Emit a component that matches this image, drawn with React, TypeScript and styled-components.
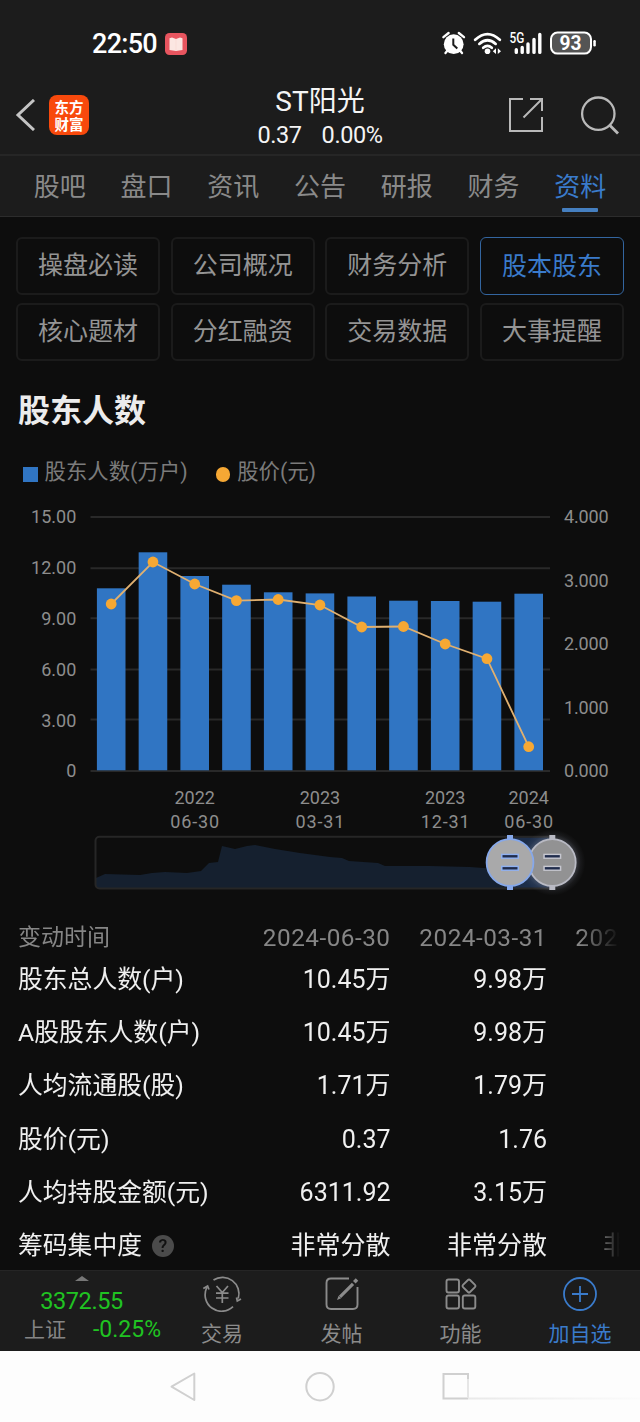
import React from 'react';
import styled, { createGlobalStyle } from 'styled-components';

const GlobalStyle = createGlobalStyle`
  * { box-sizing: border-box; }
  body {
    margin: 0;
    background: #0d0d0d;
    font-family: Roboto, "Noto Sans CJK SC", sans-serif;
    -webkit-font-smoothing: antialiased;
  }
  svg { display: block; flex: none; }
`;

const ACCENT = '#3a7bcb';
const BAR = '#3075c3';
const ORANGE = '#f6a834';

const Screen = styled.div`
  width: 640px;
  height: 1422px;
  display: flex;
  flex-direction: column;
  overflow: hidden;
  background: #0d0d0d;
`;

const StatusBar = styled.div`
  height: 75px;
  padding: 13px 44px 0 92px;
  display: flex;
  align-items: center;
  justify-content: space-between;
  background: #1c1c1c;
  color: #fff;
`;

const Clock = styled.div`
  display: flex;
  align-items: center;
  gap: 8px;
  font-size: 27px;
  line-height: 32px;
  font-weight: 500;
  letter-spacing: -0.7px;
`;

const Header = styled.header`
  height: 81px;
  display: grid;
  grid-template-columns: 200px 240px 200px;
  background: #1c1c1c;
  border-bottom: 2px solid #262626;
`;

const HeaderLeft = styled.div`
  display: flex;
  align-items: center;
  gap: 14px;
  padding-left: 15px;
`;

const Logo = styled.div`
  width: 40px;
  height: 40px;
  border-radius: 8px;
  background: #f8490c;
  color: #fff;
  display: flex;
  flex-direction: column;
  align-items: center;
  padding-top: 3px;
  font-family: "Noto Sans CJK SC", sans-serif;
  font-weight: 700;
  font-size: 14.5px;
  line-height: 17px;
`;

const HeaderTitle = styled.div`
  display: flex;
  flex-direction: column;
  align-items: center;
  color: #f4f4f4;
`;

const StockName = styled.div`
  margin-top: 10px;
  font-size: 28px;
  line-height: 34px;
`;

const Quote = styled.div`
  display: flex;
  gap: 20px;
  font-size: 23.5px;
  line-height: 33px;
  letter-spacing: -0.4px;
`;

const HeaderRight = styled.div`
  display: flex;
  align-items: center;
  justify-content: flex-end;
  gap: 36px;
  padding-right: 20px;
`;

const Tabs = styled.nav`
  height: 61px;
  padding: 0 16.5px;
  display: grid;
  grid-template-columns: repeat(7, 1fr);
  background: #1c1c1c;
  border-bottom: 1px solid #2c2c2c;
`;

const Tab = styled.div<{ $active?: boolean }>`
  display: flex;
  flex-direction: column;
  align-items: center;
  padding-top: 13px;
  font-size: 26px;
  line-height: 36px;
  color: ${(p) => (p.$active ? ACCENT : '#8a8a8a')};
  &::after {
    content: '';
    width: 36px;
    height: 4px;
    margin-top: 3px;
    border-radius: 1px;
    background: ${(p) => (p.$active ? '#457fc0' : 'transparent')};
  }
`;

const Chips = styled.div`
  margin-top: 20px;
  padding: 0 16px;
  display: grid;
  grid-template-columns: repeat(4, 1fr);
  grid-auto-rows: 58px;
  gap: 8px 10.5px;
`;

const Chip = styled.div<{ $active?: boolean }>`
  border: ${(p) => (p.$active ? '1.5px solid #33659f' : '2px solid #1b1b1b')};
  border-radius: 6px;
  display: flex;
  align-items: center;
  justify-content: center;
  padding-bottom: ${(p) => (p.$active ? 5 : 6)}px;
  font-size: 25px;
  color: ${(p) => (p.$active ? ACCENT : '#949494')};
`;

const SectionTitle = styled.h2`
  margin: 28px 0 0 18px;
  font-size: 32px;
  line-height: 44px;
  font-weight: 700;
  color: #ececec;
`;

const Legend = styled.div`
  margin-top: 21px;
  height: 41px;
  padding-left: 23px;
  display: flex;
  gap: 28px;
`;

const LegendItem = styled.div<{ $round?: boolean; $color: string }>`
  display: flex;
  gap: 7px;
  font-size: 21.4px;
  line-height: 36px;
  color: #7b7b7b;
  &::before {
    content: '';
    width: 14.5px;
    height: 14.5px;
    margin-top: 13px;
    border-radius: ${(p) => (p.$round ? '50%' : '0')};
    background: ${(p) => p.$color};
  }
`;

const Table = styled.div`
  margin-top: 22px;
  padding-left: 18px;
  overflow: hidden;
  flex: 1;
  mask-image: linear-gradient(to right, #000 580px, transparent 620px);
`;

const Row = styled.div<{ $head?: boolean }>`
  display: grid;
  grid-template-columns: 216px 156.5px 156.5px 156px;
  height: ${(p) => (p.$head ? 31 : 53.3)}px;
  align-items: center;
  font-size: ${(p) => (p.$head ? 24.3 : 25)}px;
  line-height: 30px;
  color: ${(p) => (p.$head ? '#868686' : '#f0f0f0')};
  white-space: nowrap;
`;

const Label = styled.div<{ $head?: boolean }>`
  display: flex;
  align-items: center;
  gap: 10px;
  font-size: ${(p) => (p.$head ? 23 : 24.8)}px;
`;

const Value = styled.div<{ $spaced?: boolean }>`
  text-align: right;
  letter-spacing: ${(p) => (p.$spaced ? '0.5px' : '0')};
`;

const Help = styled.span`
  width: 22px;
  height: 22px;
  border-radius: 50%;
  background: #4b4b4b;
  color: #111;
  font-size: 18px;
  line-height: 22px;
  font-weight: 500;
  text-align: center;
`;

const BottomBar = styled.footer`
  height: 81px;
  display: grid;
  grid-template-columns: 162px 120px 119px 119px 120px;
  background: #1c1c1c;
  border-top: 1px solid #252525;
`;

const IndexPanel = styled.div`
  display: flex;
  flex-direction: column;
  align-items: center;
  padding: 5px 0 0 1px;
  color: #20c322;
`;

const IndexValue = styled.div`
  font-size: 23.5px;
  line-height: 28px;
  margin-top: 6px;
  letter-spacing: -0.4px;
`;

const IndexChange = styled.div`
  align-self: stretch;
  display: flex;
  justify-content: space-between;
  padding: 0 1px 0 23px;
  font-size: 23px;
  line-height: 30px;
`;

const IndexName = styled.span`
  color: #858585;
  font-size: 21px;
`;

const Action = styled.div<{ $active?: boolean }>`
  display: flex;
  flex-direction: column;
  align-items: center;
  gap: 7px;
  padding-top: 3px;
  font-size: 21px;
  line-height: 30px;
  color: ${(p) => (p.$active ? ACCENT : '#8b8b8b')};
`;

const SystemNav = styled.div`
  height: 71px;
  background: #fdfdfd;
`;

const tabs = ['股吧', '盘口', '资讯', '公告', '研报', '财务', '资料'];
const chips = ['操盘必读', '公司概况', '财务分析', '股本股东', '核心题材', '分红融资', '交易数据', '大事提醒'];
const barTops = [588.3, 552.3, 576, 584.7, 592.3, 593.4, 596.5, 600.7, 601, 601.7, 593.7];
const prices = [604, 562, 584, 600.6, 599.5, 605, 627, 626.5, 644, 658.7, 746.7];
const leftAxis = ['15.00', '12.00', '9.00', '6.00', '3.00', '0'];
const rightAxis = ['4.000', '3.000', '2.000', '1.000', '0.000'];
const dates: [number, string, string][] = [
  [2, '2022', '06-30'],
  [5, '2023', '03-31'],
  [8, '2023', '12-31'],
  [10, '2024', '06-30'],
];
const rows = [
  ['股东总人数(户)', '10.45万', '9.98万', ''],
  ['A股股东人数(户)', '10.45万', '9.98万', ''],
  ['人均流通股(股)', '1.71万', '1.79万', ''],
  ['股价(元)', '0.37', '1.76', ''],
  ['人均持股金额(元)', '6311.92', '3.15万', ''],
  ['筹码集中度', '非常分散', '非常分散', '非常分散'],
];

const center = (i: number) => 111.2 + 41.75 * i;

function Handle({ x, active }: { x: number; active?: boolean }) {
  const edge = active ? '#86a8ea' : '#b9bac4';
  return (
    <g>
      <rect x={x - 3} y={835} width={6} height={55} fill={edge} />
      <circle cx={x} cy={862.5} r={23.4} fill={active ? '#a9a9aa' : '#929293'} stroke={edge} strokeWidth={1.8} />
      {[856.3, 868.3].map((y) => (
        <g key={y}>
          <rect x={x - 9} y={y - 2.6} width={18} height={5.2} fill={active ? '#8fb0f0' : '#c6c7d0'} />
          <rect x={x - 7.5} y={y - 1.2} width={15} height={2.4} fill="#202c4c" />
        </g>
      ))}
    </g>
  );
}

function Chart() {
  return (
    <svg width="640" height="405" viewBox="0 495 640 405" fontSize="18" fill="#8d8d8d">
      <defs>
        <radialGradient id="glow">
          <stop offset="0.74" stopColor="#8d93a5" stopOpacity="0.28" />
          <stop offset="0.86" stopColor="#8d93a5" stopOpacity="0.09" />
          <stop offset="1" stopColor="#8d93a5" stopOpacity="0" />
        </radialGradient>
      </defs>
      {[517, 568.3, 618.3, 669.6, 719.6, 771].map((y) => (
        <line key={y} x1="90.5" x2="550" y1={y} y2={y} stroke="#292929" strokeWidth="2" />
      ))}
      {barTops.map((y, i) => (
        <rect key={i} x={center(i) - 14.3} y={y} width={28.6} height={770.3 - y} fill={BAR} />
      ))}
      <polyline points={prices.map((y, i) => `${center(i)},${y}`).join(' ')} fill="none" stroke="#e0b070" strokeWidth="1.8" />
      {prices.map((y, i) => (
        <circle key={i} cx={center(i)} cy={y} r="5.4" fill={ORANGE} />
      ))}
      {leftAxis.map((t, i) => (
        <text key={t} x="76.3" y={523.3 + i * 50.8} textAnchor="end">{t}</text>
      ))}
      {rightAxis.map((t, i) => (
        <text key={t} x="564" y={523.3 + i * 63.5} textLength="44.5">{t}</text>
      ))}
      {dates.map(([i, year, day]) => (
        <g key={i} textAnchor="middle">
          <text x={center(i)} y="803.5">{year}</text>
          <text x={center(i)} y="828.3" textLength="49">{day}</text>
        </g>
      ))}
      <path
        d="M96 888V878L105 874L140 875L152 873L165 872L187 873L201 871L209 863L218 862L222 846L235 849L247 846L255 845L275 849L300 853L330 857L342 858L349 861L378 863L385 866L430 866L470 867L510 870L552 872V888Z"
        fill="#15202f"
      />
      <rect x="511" y="837" width="41" height="51" fill="#1c2d49" />
      <rect x="95.5" y="836.7" width="457" height="51.8" rx="4" fill="none" stroke="#262626" strokeWidth="2" />
      <circle cx="552.3" cy="862.5" r="33" fill="url(#glow)" />
      <Handle x={552.3} />
      <Handle x={510} active />
    </svg>
  );
}

function StatusIcons() {
  return (
    <svg width="154" height="26" viewBox="442 31 154 26" fill="#fff">
      <circle cx="453.7" cy="44.2" r="9.9" />
      <path d="M443.4 37.2L448.6 33M464 37.2L458.8 33M447.5 50.5L445.5 53M460 50.5L462 53" stroke="#fff" strokeWidth="2.3" strokeLinecap="round" />
      <path d="M453.3 38.5V44.8L457.3 48.5" stroke="#1c1c1c" strokeWidth="2" fill="none" />
      <g fill="none" stroke="#fff" strokeWidth="2.7" strokeLinecap="round">
        <path d="M475.2 39.8Q487.5 28.6 499.8 39.8" />
        <path d="M479.3 43.9Q487.5 36.6 495.7 43.9" />
        <path d="M483.2 47.8Q487.5 44 491.8 47.8" />
      </g>
      <circle cx="487.5" cy="51.3" r="2.8" />
      <path d="M496 48.2V54L492.8 51.2ZM497.8 48.2V54L501 51.2Z" />
      <text x="509.6" y="43" fontSize="14" fontWeight="500" textLength="14.8" lengthAdjust="spacingAndGlyphs">5G</text>
      <g stroke="#fff" strokeWidth="3.4" strokeLinecap="round">
        <path d="M516.3 49.7V52.4M522.2 47.5V52.4M528 44V52.4M534 39.5V52.4M539.8 34.5V52.4" />
      </g>
      <rect x="551" y="32.6" width="40" height="21" rx="6.5" fill="#545454" stroke="#fff" strokeWidth="2" />
      <rect x="593.3" y="40" width="2.5" height="6.5" rx="1.2" />
      <text x="559.5" y="50.2" fontSize="19.5" fontWeight="700" textLength="22" lengthAdjust="spacingAndGlyphs">93</text>
    </svg>
  );
}

export default function App() {
  return (
    <Screen>
      <GlobalStyle />
      <StatusBar>
        <Clock>
          22:50
          <svg width="22" height="22" viewBox="0 0 22 22">
            <rect width="22" height="22" rx="4.5" fill="#e8555f" />
            <path d="M4.5 5.2L7 4.5L11 6L15 4.5L17.5 5.2V17L11 18L4.5 17Z" fill="#fbe6e2" />
            <path d="M11 6V17" stroke="#f9dcd7" />
          </svg>
        </Clock>
        <StatusIcons />
      </StatusBar>

      <Header>
        <HeaderLeft>
          <svg width="20" height="32" viewBox="0 0 20 32" fill="none" stroke="#c4c4c4" strokeWidth="3">
            <path d="M19 1L3 16L19 31" />
          </svg>
          <Logo><span>东方</span><span>财富</span></Logo>
        </HeaderLeft>
        <HeaderTitle>
          <StockName>ST阳光</StockName>
          <Quote><span>0.37</span><span>0.00%</span></Quote>
        </HeaderTitle>
        <HeaderRight>
          <svg width="36" height="36" viewBox="0 0 36 36" fill="none" stroke="#b9b9b9" strokeWidth="2">
            <path d="M15 2H2V34H34V20M22 2H34V14M34 2L15.5 20.5" />
          </svg>
          <svg width="40" height="40" viewBox="0 0 40 40" fill="none" stroke="#b9b9b9" strokeWidth="2.3">
            <circle cx="18.3" cy="18.7" r="16.2" />
            <path d="M29.5 30L38 38.5" strokeWidth="2.8" />
          </svg>
        </HeaderRight>
      </Header>

      <Tabs>
        {tabs.map((t) => <Tab key={t} $active={t === '资料'}>{t}</Tab>)}
      </Tabs>

      <Chips>
        {chips.map((c) => <Chip key={c} $active={c === '股本股东'}>{c}</Chip>)}
      </Chips>

      <SectionTitle>股东人数</SectionTitle>
      <Legend>
        <LegendItem $color={BAR}>股东人数(万户)</LegendItem>
        <LegendItem $color={ORANGE} $round>股价(元)</LegendItem>
      </Legend>
      <Chart />

      <Table>
        <Row $head>
          <Label $head>变动时间</Label>
          <Value $spaced>2024-06-30</Value>
          <Value $spaced>2024-03-31</Value>
          <Value $spaced>2023-12-31</Value>
        </Row>
        {rows.map(([label, ...values]) => (
          <Row key={label}>
            <Label>
              {label}
              {label === '筹码集中度' && <Help>?</Help>}
            </Label>
            {values.map((v, i) => <Value key={i}>{v}</Value>)}
          </Row>
        ))}
      </Table>

      <BottomBar>
        <IndexPanel>
          <svg width="14" height="5" viewBox="0 0 14 5"><path d="M0 5L7 0L14 5Z" fill="#777" /></svg>
          <IndexValue>3372.55</IndexValue>
          <IndexChange><IndexName>上证</IndexName><span>-0.25%</span></IndexChange>
        </IndexPanel>
        <Action>
          <svg width="40" height="38" viewBox="0 0 40 38" fill="none" stroke="currentColor" strokeWidth="1.7">
            <path d="M11.5 6A16.5 16.5 0 0 1 36.3 24.5M34.5 23.5L35.3 27L39 25" />
            <path d="M31 32.7A16.5 16.5 0 0 1 4.8 13.5M1.3 14.6L5.6 12L7 15.5" />
            <path d="M14.5 12L20.3 18.5L26 12M20.3 18.5V29M14 19.2H26.5M14 24H26.5" />
          </svg>
          交易
        </Action>
        <Action>
          <svg width="40" height="38" viewBox="0 0 40 38" fill="none" stroke="currentColor" strokeWidth="1.9">
            <path d="M27 4.5H9Q4.5 4.5 4.5 9V30.5Q4.5 35 9 35H31Q35.5 35 35.5 30.5V13" />
            <path d="M18 22.8L31 9.8" strokeWidth="3.2" />
            <path d="M15 26L16.6 21.8L19.2 24.3Z" fill="currentColor" stroke="none" />
            <path d="M32.3 8.3L35 5.6" strokeWidth="3.6" />
          </svg>
          发帖
        </Action>
        <Action>
          <svg width="40" height="38" viewBox="0 0 40 38" fill="none" stroke="currentColor" strokeWidth="1.9">
            <rect x="5.5" y="5.5" width="12.5" height="13" rx="2" />
            <rect x="5.5" y="21.5" width="12.5" height="13" rx="2" />
            <rect x="21.8" y="21.5" width="12.5" height="13" rx="2" />
            <rect x="23" y="7" width="10" height="10" rx="1.5" transform="rotate(45 28 12)" />
          </svg>
          功能
        </Action>
        <Action $active>
          <svg width="40" height="38" viewBox="0 0 40 38" fill="none" stroke="currentColor" strokeWidth="1.8">
            <circle cx="20" cy="20" r="16" />
            <path d="M20 12V28M12 20H28" />
          </svg>
          加自选
        </Action>
      </BottomBar>

      <SystemNav>
        <svg width="640" height="71" viewBox="0 0 640 71" fill="none" stroke="#d0d0d0" strokeWidth="2">
          <defs>
            <linearGradient id="fade">
              <stop offset="0" stopColor="#e9e9e9" />
              <stop offset="1" stopColor="#fbfbfb" />
            </linearGradient>
          </defs>
          <rect x="468" y="46.5" width="172" height="2" fill="url(#fade)" stroke="none" />
          <path d="M194.3 22.5V49L171.5 35.7Z" strokeLinejoin="round" />
          <circle cx="320" cy="35.7" r="13.7" />
          <path d="M468 28V23H443.5V47.5H468" />
          <path d="M468 28V47" stroke="#e6e6e6" />
        </svg>
      </SystemNav>
    </Screen>
  );
}
